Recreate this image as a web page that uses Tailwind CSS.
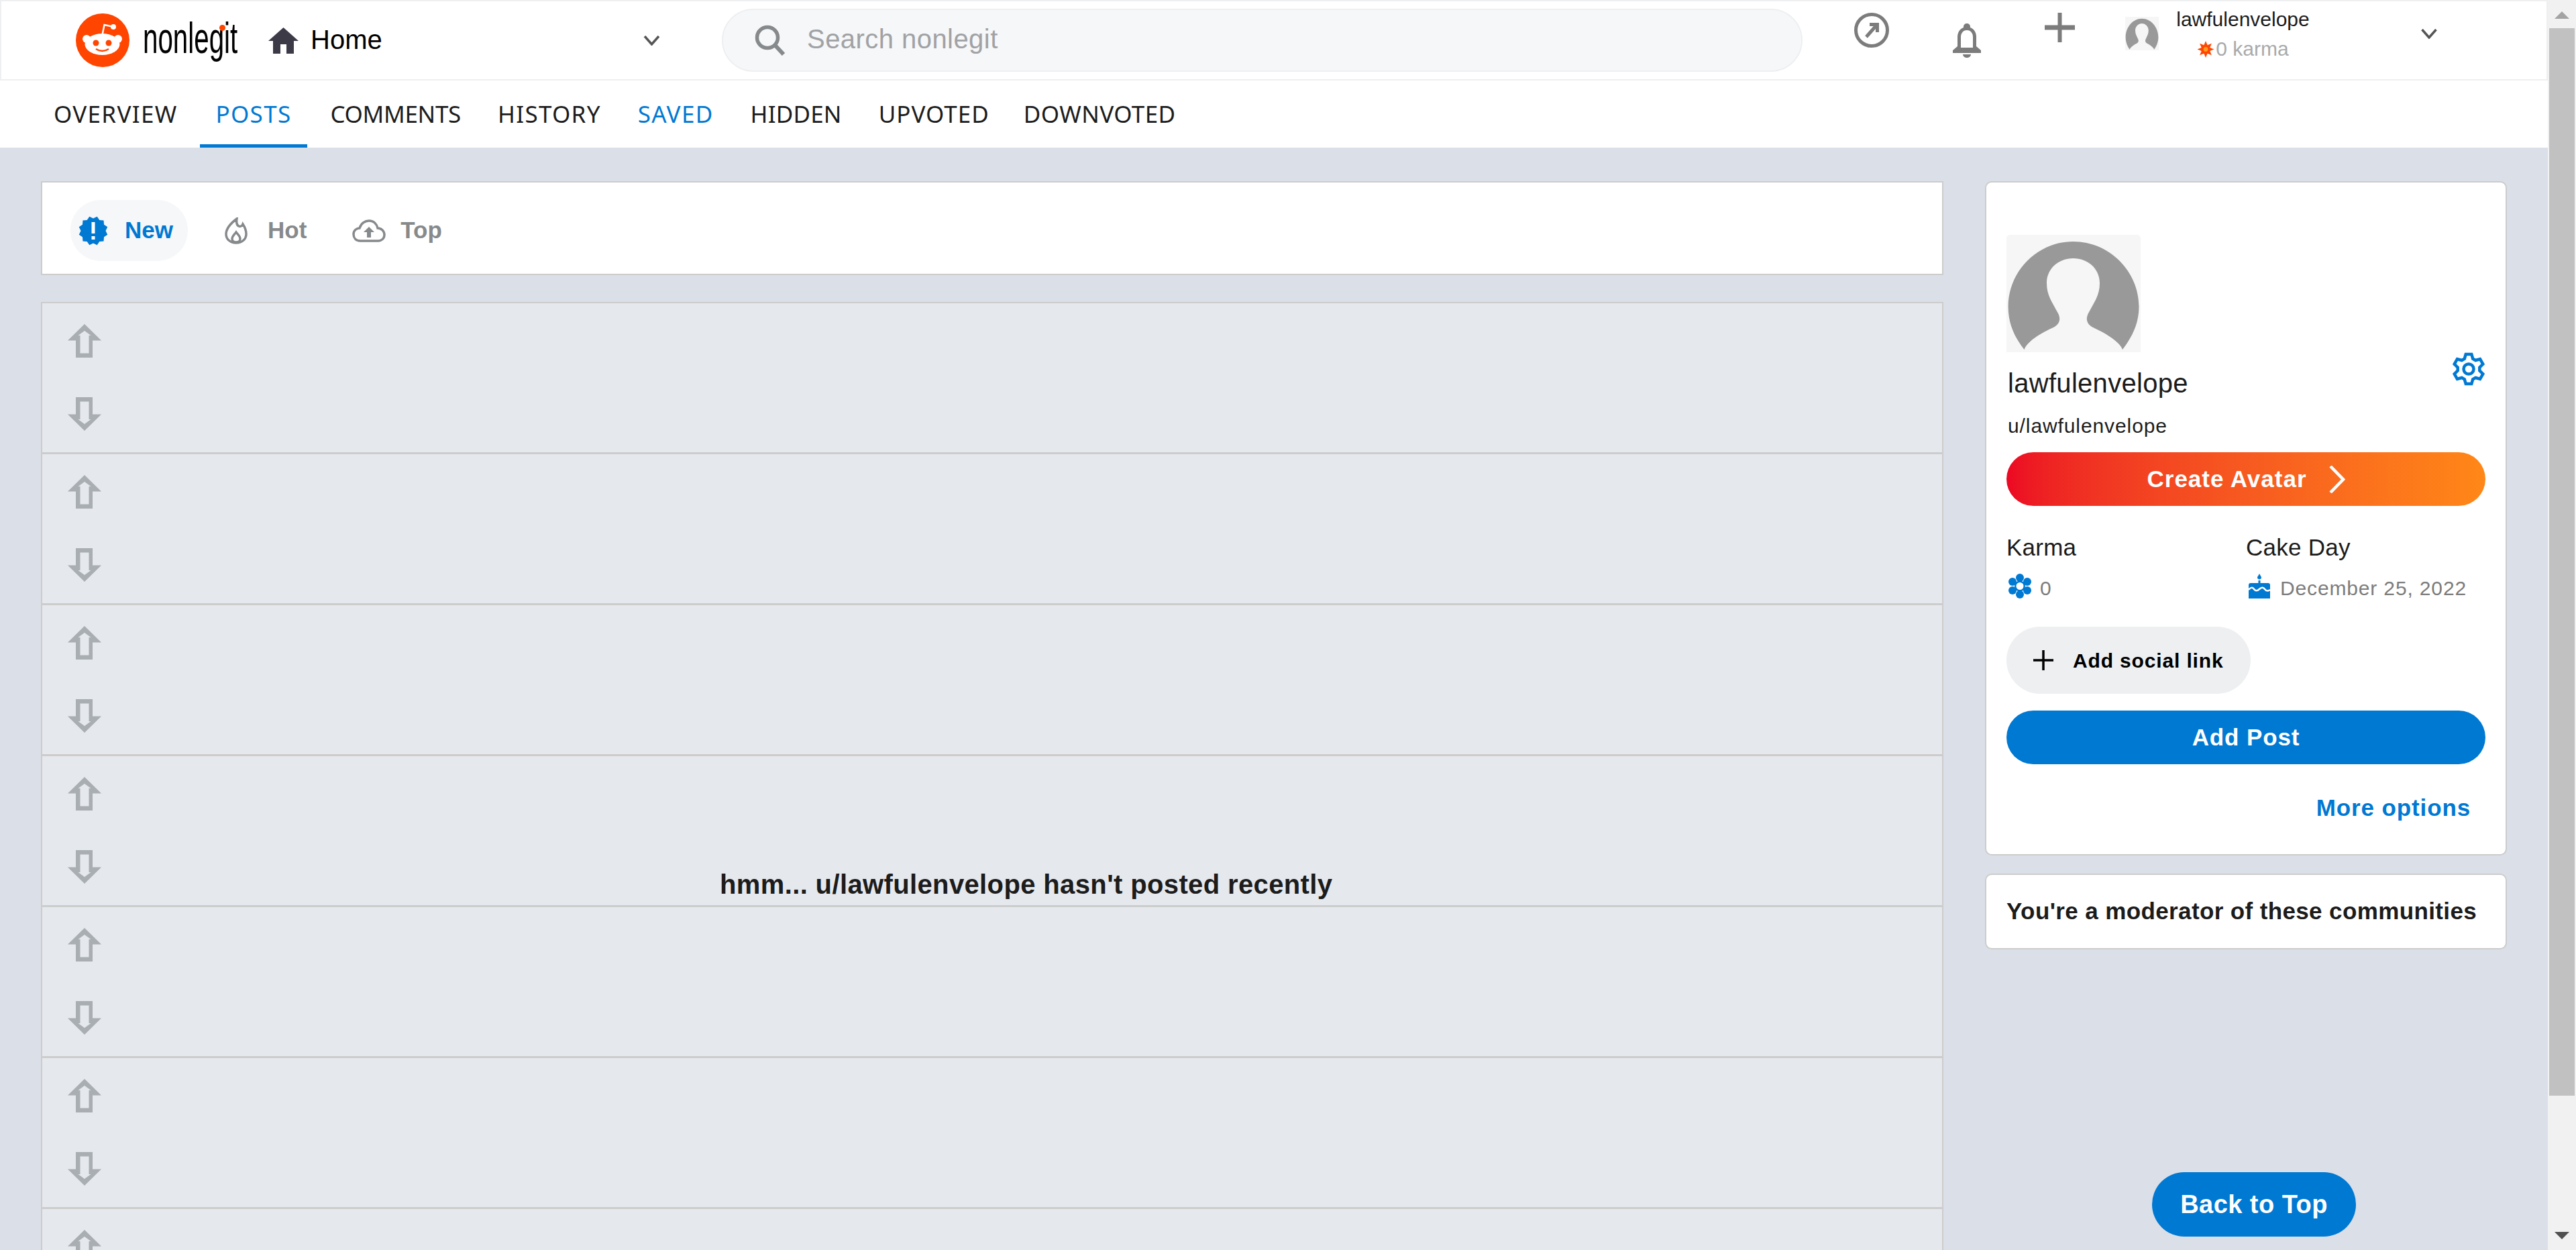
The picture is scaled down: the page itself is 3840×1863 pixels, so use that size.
<!DOCTYPE html>
<html lang="en">
<head>
    <meta charset="UTF-8">
    <title>lawfulenvelope - nonlegit</title>
    <script src="https://cdn.jsdelivr.net/npm/@tailwindcss/browser@4"></script>
</head>
<body class="font-['Liberation_Sans',Arial,sans-serif] text-[#1c1c1c]">
<div class="flex h-screen overflow-hidden bg-[#dbdfe7]">
    <div class="w-[3798px] flex flex-col shrink-0 relative">
        <!-- top bar -->
        <header class="h-[120px] shrink-0 bg-white border-2 border-[#edeff1] flex items-center">
            <svg class="ml-[111px] w-[80px] h-[80px] shrink-0" viewBox="0 0 80 80">
                <circle cx="40" cy="40" r="40" fill="#ff4500"/>
                <circle cx="16" cy="38" r="6" fill="#fff"/>
                <circle cx="63" cy="38" r="6" fill="#fff"/>
                <ellipse cx="39.5" cy="46" rx="26" ry="16" fill="#fff"/>
                <path d="M39.5 32 L42.5 17 L54 19.5" fill="none" stroke="#fff" stroke-width="2.5"/>
                <circle cx="56" cy="20" r="4" fill="#fff"/>
                <circle cx="30" cy="44" r="4.5" fill="#ff4500"/>
                <circle cx="49" cy="44" r="4.5" fill="#ff4500"/>
                <path d="M30 53 Q39.5 59 49 53" fill="none" stroke="#ff4500" stroke-width="2.5"/>
            </svg>
            <div class="relative ml-5 w-[142px] h-[80px] shrink-0">
                <span class="absolute left-0 top-[-3px] origin-left scale-x-[.63] text-[64px] leading-[80px] text-black whitespace-nowrap">nonlegit</span>
                <span class="absolute left-[114px] top-[17px] w-[9px] h-[9px] rounded-full bg-[#ff4500]"></span>
            </div>
            <svg class="ml-[45px] w-[45px] h-[39px] shrink-0" viewBox="0 0 45 39"><path d="M22.5 0 L45 20 H38 V39 H27 V25 H18 V39 H7 V20 H0 Z" fill="#3d3a47"/></svg>
            <span class="ml-[18px] mb-[2px] w-[107px] text-[40px] leading-[46px] text-black shrink-0">Home</span>
            <svg class="ml-[389px] w-[25px] h-[15px] shrink-0" viewBox="0 0 25 15"><path d="M2 1 L12.5 13 L23 1" fill="none" stroke="#555" stroke-width="3.5"/></svg>
            <div class="ml-[92px] w-[1611px] h-[94px] shrink-0 rounded-full bg-[#f6f7f8] border-2 border-[#edeff1] flex items-center pl-[47px]">
                <svg class="w-[46px] h-[46px] shrink-0" viewBox="0 0 46 46"><circle cx="19" cy="19" r="15.5" fill="none" stroke="#878a8c" stroke-width="5.5"/><path d="M30 30 L43 44" stroke="#878a8c" stroke-width="6"/></svg>
                <span class="ml-[32px] mb-[5px] text-[40px] leading-[46px] tracking-[.45px] text-[#a0a2a5]">Search nonlegit</span>
            </div>
            <svg class="self-start mt-[17px] ml-[77px] w-[52px] h-[52px] shrink-0" viewBox="0 0 52 52">
                <circle cx="26" cy="26" r="23.5" fill="none" stroke="#7c7c7c" stroke-width="5"/>
                <path d="M18 36 L33 19 M23 17.5 H34.5 V29" fill="none" stroke="#7c7c7c" stroke-width="5"/>
            </svg>
            <svg class="self-start mt-[33px] ml-[95px] w-[42px] h-[51px] shrink-0" viewBox="0 0 42 51">
                <path fill-rule="evenodd" d="M21 0 C24 0 26 2 26 5 V6 C32 8 35 14 35 20 V34 L42 40 V44 H0 V40 L7 34 V20 C7 14 10 8 16 6 V5 C16 2 18 0 21 0 Z M21 10 C15 10 12 15 12 20 V36 H30 V20 C30 15 27 10 21 10 Z" fill="#7c7c7c"/>
                <path d="M15 46 H27 C27 49 24 51 21 51 C18 51 15 49 15 46 Z" fill="#7c7c7c"/>
            </svg>
            <svg class="self-start mt-[17px] ml-[95px] w-[45px] h-[44px] shrink-0" viewBox="0 0 45 44"><path d="M19.5 0 H25.5 V18.5 H45 V25.5 H25.5 V44 H19.5 V25.5 H0 V18.5 H19.5 Z" fill="#7c7c7c"/></svg>
            <svg class="self-start mt-[23px] ml-[75px] w-[50px] h-[50px] shrink-0 bg-[#f6f6f6]" viewBox="0 0 200 175" preserveAspectRatio="none">
                <path d="M99.5 10 C45 10 2.6 55 2.6 107 C2.6 135 14 155 26.5 171 C30 160 50 147 70 138 C80 133 81 125 77 117 C68 100 60 90 60 72 C60 50 78 35 99.5 35 C121 35 139 50 139 72 C139 90 131 100 122 117 C118 125 119 133 129 138 C149 147 169 160 173 171 C185 155 197.5 135 197.5 107 C197.5 55 154 10 99.5 10 Z" fill="#999"/>
            </svg>
            <div class="self-start mt-[4px] ml-[25px] w-[201px] shrink-0 text-center text-[30px]">
                <div class="leading-[46px] text-[#1c1c1c]">lawfulenvelope</div>
                <div class="leading-[42px] flex items-center justify-center text-[#a8aaab]">
                    <svg class="w-[26px] h-[25px] mr-[2px]" viewBox="0 0 44 44"><polygon points="22,0 26.6,10.9 37.6,6.4 33.1,17.4 44,22 33.1,26.6 37.6,37.6 26.6,33.1 22,44 17.4,33.1 6.4,37.6 10.9,26.6 0,22 10.9,17.4 6.4,6.4 17.4,10.9" fill="#ff4500"/><circle cx="22" cy="22" r="6" fill="#ff9a1f"/></svg>
                    <span>0 karma</span>
                </div>
            </div>
            <svg class="ml-[164px] w-[26px] h-[15px] shrink-0 self-start mt-[41px]" viewBox="0 0 25 15"><path d="M2 1 L12.5 13 L23 1" fill="none" stroke="#555" stroke-width="3.5"/></svg>
        </header>

        <!-- profile tabs -->
        <nav class="h-[100px] shrink-0 bg-white flex pl-[56px] font-['Noto_Sans',sans-serif] text-[35px] text-[#1c1c1c]">
            <a class="px-6 mr-[9px] flex items-center border-y-[5px] border-transparent tracking-[1.3px]">OVERVIEW</a>
            <a class="px-6 mr-[10px] flex items-center border-y-[5px] border-t-transparent border-b-[#0079d3] text-[#0079d3] tracking-[1.3px]">POSTS</a>
            <a class="px-6 mr-[7px] flex items-center border-y-[5px] border-transparent tracking-[-.3px]">COMMENTS</a>
            <a class="px-6 mr-[7px] flex items-center border-y-[5px] border-transparent tracking-[1.3px]">HISTORY</a>
            <a class="px-6 mr-[7px] flex items-center border-y-[5px] border-transparent text-[#0079d3] tracking-[1.3px]">SAVED</a>
            <a class="px-6 mr-[7px] flex items-center border-y-[5px] border-transparent tracking-[.2px]">HIDDEN</a>
            <a class="px-6 mr-[3px] flex items-center border-y-[5px] border-transparent tracking-[1px]">UPVOTED</a>
            <a class="px-6 flex items-center border-y-[5px] border-transparent tracking-[.4px]">DOWNVOTED</a>
        </nav>

        <main class="flex pt-[50px] pl-[61px] flex-1 min-h-0">
            <!-- posts column -->
            <section class="w-[2836px] shrink-0 relative">
                <div class="h-[140px] bg-white border-2 border-[#ccc] flex items-center pl-[42px] pt-[7px] text-[35px] font-bold text-[#878a8c]">
                    <div class="w-[175px] h-[91px] rounded-[45px] bg-[#f6f7f8] flex items-center pl-[12px] text-[#0079d3] shrink-0">
                        <svg class="w-[44px] h-[44px] shrink-0" viewBox="0 0 44 44"><polygon points="22,3.5 27.7,.75 31.25,5.98 37.56,6.44 38.02,12.75 43.25,16.3 40.5,22 43.25,27.7 38.02,31.25 37.56,37.56 31.25,38.02 27.7,43.25 22,40.5 16.3,43.25 12.75,38.02 6.44,37.56 5.98,31.25 .75,27.7 3.5,22 .75,16.3 5.98,12.75 6.44,6.44 12.75,5.98 16.3,.75" fill="#0079d3"/><rect x="19.5" y="9" width="5" height="17" fill="#fff"/><rect x="19.5" y="30" width="5" height="5" fill="#fff"/></svg>
                        <span class="ml-[25px]">New</span>
                    </div>
                    <svg class="ml-[55px] w-[34px] h-[40px] shrink-0" viewBox="0 0 34 40"><path d="M18 2 C10 8 2 16 2 25 C2 33 9 38 17 38 C25 38 32 33 32 25 C32 18 29 13 27 10 C26 13 23 14 21 13 C18 12 17 7 18 2 Z M17 22 C14 26 11 28 11 32 C11 35 14 37 17 37 C20 37 23 35 23 32 C23 28 20 26 17 22 Z" fill="none" stroke="#878a8c" stroke-width="3.5"/></svg>
                    <span class="ml-[30px]">Hot</span>
                    <svg class="ml-[68px] w-[50px] h-[34px] shrink-0" viewBox="0 0 50 34"><path d="M12 32 C5 32 2 27 2 22 C2 16 7 13 11 13 C13 6 19 2 25 2 C33 2 37 8 38 13 C44 13 48 18 48 23 C48 28 44 32 39 32 Z" fill="none" stroke="#878a8c" stroke-width="3.5"/><path d="M25 11 L33 19 H28 V27 H22 V19 H17 Z" fill="#878a8c"/></svg>
                    <span class="ml-[22px]">Top</span>
                </div>

                <div class="mt-10">
                    <div class="h-[225px] bg-[#e5e8ed] border-x-2 border-t-2 border-b border-[#ccc] pl-[38px] pt-[31px]">
                        <svg class="w-[50px] h-[50px]" viewBox="0 0 50 50"><path fill-rule="evenodd" d="M25 0 L50 24.5 H37 V50 H12 V24.5 H0 Z M25 10 L34.5 17 H31.5 V43.5 H18.5 V17 H15.5 Z" fill="#a9aeb2"/></svg>
                        <svg class="w-[50px] h-[50px] mt-[59px]" viewBox="0 0 50 50"><path fill-rule="evenodd" d="M25 50 L50 25.5 H37 V0 H12 V25.5 H0 Z M25 40 L34.5 33 H31.5 V6.5 H18.5 V33 H15.5 Z" fill="#a9aeb2"/></svg>
                    </div>
                    <div class="h-[225px] bg-[#e5e8ed] border-x-2 border-t-2 border-b border-[#ccc] pl-[38px] pt-[31px]">
                        <svg class="w-[50px] h-[50px]" viewBox="0 0 50 50"><path fill-rule="evenodd" d="M25 0 L50 24.5 H37 V50 H12 V24.5 H0 Z M25 10 L34.5 17 H31.5 V43.5 H18.5 V17 H15.5 Z" fill="#a9aeb2"/></svg>
                        <svg class="w-[50px] h-[50px] mt-[59px]" viewBox="0 0 50 50"><path fill-rule="evenodd" d="M25 50 L50 25.5 H37 V0 H12 V25.5 H0 Z M25 40 L34.5 33 H31.5 V6.5 H18.5 V33 H15.5 Z" fill="#a9aeb2"/></svg>
                    </div>
                    <div class="h-[225px] bg-[#e5e8ed] border-x-2 border-t-2 border-b border-[#ccc] pl-[38px] pt-[31px]">
                        <svg class="w-[50px] h-[50px]" viewBox="0 0 50 50"><path fill-rule="evenodd" d="M25 0 L50 24.5 H37 V50 H12 V24.5 H0 Z M25 10 L34.5 17 H31.5 V43.5 H18.5 V17 H15.5 Z" fill="#a9aeb2"/></svg>
                        <svg class="w-[50px] h-[50px] mt-[59px]" viewBox="0 0 50 50"><path fill-rule="evenodd" d="M25 50 L50 25.5 H37 V0 H12 V25.5 H0 Z M25 40 L34.5 33 H31.5 V6.5 H18.5 V33 H15.5 Z" fill="#a9aeb2"/></svg>
                    </div>
                    <div class="h-[225px] bg-[#e5e8ed] border-x-2 border-t-2 border-b border-[#ccc] pl-[38px] pt-[31px]">
                        <svg class="w-[50px] h-[50px]" viewBox="0 0 50 50"><path fill-rule="evenodd" d="M25 0 L50 24.5 H37 V50 H12 V24.5 H0 Z M25 10 L34.5 17 H31.5 V43.5 H18.5 V17 H15.5 Z" fill="#a9aeb2"/></svg>
                        <svg class="w-[50px] h-[50px] mt-[59px]" viewBox="0 0 50 50"><path fill-rule="evenodd" d="M25 50 L50 25.5 H37 V0 H12 V25.5 H0 Z M25 40 L34.5 33 H31.5 V6.5 H18.5 V33 H15.5 Z" fill="#a9aeb2"/></svg>
                    </div>
                    <div class="h-[225px] bg-[#e5e8ed] border-x-2 border-t-2 border-b border-[#ccc] pl-[38px] pt-[31px]">
                        <svg class="w-[50px] h-[50px]" viewBox="0 0 50 50"><path fill-rule="evenodd" d="M25 0 L50 24.5 H37 V50 H12 V24.5 H0 Z M25 10 L34.5 17 H31.5 V43.5 H18.5 V17 H15.5 Z" fill="#a9aeb2"/></svg>
                        <svg class="w-[50px] h-[50px] mt-[59px]" viewBox="0 0 50 50"><path fill-rule="evenodd" d="M25 50 L50 25.5 H37 V0 H12 V25.5 H0 Z M25 40 L34.5 33 H31.5 V6.5 H18.5 V33 H15.5 Z" fill="#a9aeb2"/></svg>
                    </div>
                    <div class="h-[225px] bg-[#e5e8ed] border-x-2 border-t-2 border-b border-[#ccc] pl-[38px] pt-[31px]">
                        <svg class="w-[50px] h-[50px]" viewBox="0 0 50 50"><path fill-rule="evenodd" d="M25 0 L50 24.5 H37 V50 H12 V24.5 H0 Z M25 10 L34.5 17 H31.5 V43.5 H18.5 V17 H15.5 Z" fill="#a9aeb2"/></svg>
                        <svg class="w-[50px] h-[50px] mt-[59px]" viewBox="0 0 50 50"><path fill-rule="evenodd" d="M25 50 L50 25.5 H37 V0 H12 V25.5 H0 Z M25 40 L34.5 33 H31.5 V6.5 H18.5 V33 H15.5 Z" fill="#a9aeb2"/></svg>
                    </div>
                    <div class="h-[225px] bg-[#e5e8ed] border-x-2 border-t-2 border-b border-[#ccc] pl-[38px] pt-[31px]">
                        <svg class="w-[50px] h-[50px]" viewBox="0 0 50 50"><path fill-rule="evenodd" d="M25 0 L50 24.5 H37 V50 H12 V24.5 H0 Z M25 10 L34.5 17 H31.5 V43.5 H18.5 V17 H15.5 Z" fill="#a9aeb2"/></svg>
                    </div>
                </div>

                <!-- empty message sits over the placeholder rows -->
                <div class="absolute left-[1012px] top-[1025px] text-[40px] leading-[46px] font-bold tracking-[.37px] whitespace-nowrap">hmm... u/lawfulenvelope hasn't posted recently</div>
            </section>

            <!-- sidebar -->
            <aside class="ml-[62px] w-[778px] shrink-0">
                <div class="h-[1005px] bg-white border-2 border-[#ccc] rounded-[10px] pt-[78px] px-[30px]">
                    <svg class="w-[200px] h-[175px] bg-[#f6f6f6] rounded-t-[5px]" viewBox="0 0 200 175">
                        <path d="M99.5 10 C45 10 2.6 55 2.6 107 C2.6 135 14 155 26.5 171 C30 160 50 147 70 138 C80 133 81 125 77 117 C68 100 60 90 60 72 C60 50 78 35 99.5 35 C121 35 139 50 139 72 C139 90 131 100 122 117 C118 125 119 133 129 138 C149 147 169 160 173 171 C185 155 197.5 135 197.5 107 C197.5 55 154 10 99.5 10 Z" fill="#999"/>
                    </svg>
                    <div class="flex justify-between items-start h-[70px]">
                        <span class="mt-[21px] ml-[2px] text-[40px] leading-[50px] tracking-[.3px]">lawfulenvelope</span>
                        <svg class="w-[50px] h-[50px]" viewBox="0 0 50 50">
                            <polygon points="20.7,2.9 29.3,2.9 31.2,9.7 35.2,12 42,10.2 46.3,17.7 41.3,22.7 41.3,27.3 46.3,32.3 42,39.8 35.2,38 31.2,40.3 29.3,47.1 20.7,47.1 18.8,40.3 14.8,38 8,39.8 3.7,32.3 8.7,27.3 8.7,22.7 3.7,17.7 8,10.2 14.8,12 18.8,9.7" fill="none" stroke="#0079d3" stroke-width="4.5"/>
                            <circle cx="25" cy="25" r="7.5" fill="none" stroke="#0079d3" stroke-width="4.5"/>
                        </svg>
                    </div>
                    <div class="mt-[22px] mb-[-1px] ml-[2px] text-[30px] leading-[36px] tracking-[.9px]">u/lawfulenvelope</div>
                    <div class="mt-[22px] h-[80px] rounded-full bg-gradient-to-r from-[#ec0623] to-[#ff8717] flex items-center justify-center text-white text-[35px] font-bold tracking-[1px]">
                        Create Avatar
                        <svg class="ml-[33px] w-[24px] h-[41px]" viewBox="0 0 24 41"><path d="M2 1 L21 20.5 L2 40" fill="none" stroke="#fff" stroke-width="4.5"/></svg>
                    </div>
                    <div class="mt-[37px] grid grid-cols-[357px_1fr]">
                        <div>
                            <div class="text-[35px] leading-[50px] tracking-[.25px]">Karma</div>
                            <div class="mt-[13px] h-[38px] flex items-center text-[30px] tracking-[.85px] text-[#7c7c7c]">
                                <svg class="ml-[3px] w-[34px] h-[37px]" viewBox="0 0 34 37">
                                    <circle cx="17" cy="6" r="6" fill="#0079d3"/><circle cx="17" cy="31" r="6" fill="#0079d3"/>
                                    <circle cx="6" cy="12" r="6" fill="#0079d3"/><circle cx="28" cy="12" r="6" fill="#0079d3"/>
                                    <circle cx="6" cy="25" r="6" fill="#0079d3"/><circle cx="28" cy="25" r="6" fill="#0079d3"/>
                                    <circle cx="17" cy="18.5" r="8" fill="#0079d3"/><circle cx="17" cy="18.5" r="5.5" fill="#fff"/>
                                </svg>
                                <span class="ml-[13px] pt-[6px]">0</span>
                            </div>
                        </div>
                        <div>
                            <div class="text-[35px] leading-[50px] tracking-[.25px]">Cake Day</div>
                            <div class="mt-[13px] h-[38px] flex items-center text-[30px] tracking-[.85px] text-[#7c7c7c]">
                                <svg class="ml-[4px] w-[32px] h-[37px]" viewBox="0 0 32 37">
                                    <path d="M16 0 C17.5 3 19 4.5 19 6 C19 7.5 17.5 8.5 16 8.5 C14.5 8.5 13 7.5 13 6 C13 4.5 14.5 3 16 0 Z M14.5 10 H17.5 V14 H14.5 Z M3 14 H29 C31 14 32 15 32 17 V37 H0 V17 C0 15 1 14 3 14 Z" fill="#0079d3"/>
                                    <path d="M0 24 C3 20 6 20 8 23 C10 26 13 26 16 23 C19 20 22 20 24 23 C26 26 29 26 32 24" fill="none" stroke="#fff" stroke-width="2.5"/>
                                </svg>
                                <span class="ml-[15px] pt-[6px]">December 25, 2022</span>
                            </div>
                        </div>
                    </div>
                    <div class="mt-[42px] w-[364px] h-[100px] rounded-[50px] bg-[#edeff1] flex items-center pl-[40px] text-[30px] font-bold tracking-[.85px] text-black">
                        <svg class="w-[30px] h-[30px]" viewBox="0 0 30 30"><path d="M15 0 V30 M0 15 H30" stroke="#000" stroke-width="3.5"/></svg>
                        <span class="ml-[29px]">Add social link</span>
                    </div>
                    <div class="mt-[25px] h-[80px] rounded-full bg-[#0079d3] flex items-center justify-center text-white text-[35px] font-bold tracking-[.875px]">Add Post</div>
                    <div class="mt-[40px] pr-[22px] text-right text-[35px] leading-[50px] font-bold tracking-[.875px] text-[#0079d3]">More options</div>
                </div>
                <div class="mt-[27px] h-[113px] bg-white border-2 border-[#ccc] rounded-[10px] flex items-center pl-[30px] text-[35px] font-bold tracking-[.375px]">You're a moderator of these communities</div>
            </aside>
        </main>

        <!-- floating back to top -->
        <button class="absolute left-[3208px] top-[1747px] w-[304px] h-[96px] rounded-[48px] bg-[#0079d3] text-white text-[38px] font-bold tracking-[.45px] text-center">Back to Top</button>
    </div>

    <!-- scrollbar -->
    <div class="w-[42px] shrink-0 bg-[#f1f1f1] flex flex-col items-center">
        <svg class="mt-[17px] w-[22px] h-[11px] shrink-0" viewBox="0 0 22 11"><path d="M11 0 L22 11 H0 Z" fill="#a3a3a3"/></svg>
        <div class="mt-[14px] w-[38px] h-[1591px] bg-[#c1c1c1] shrink-0"></div>
        <svg class="mt-[203px] w-[22px] h-[11px] shrink-0" viewBox="0 0 22 11"><path d="M11 11 L22 0 H0 Z" fill="#505050"/></svg>
    </div>
</div>
</body>
</html>
